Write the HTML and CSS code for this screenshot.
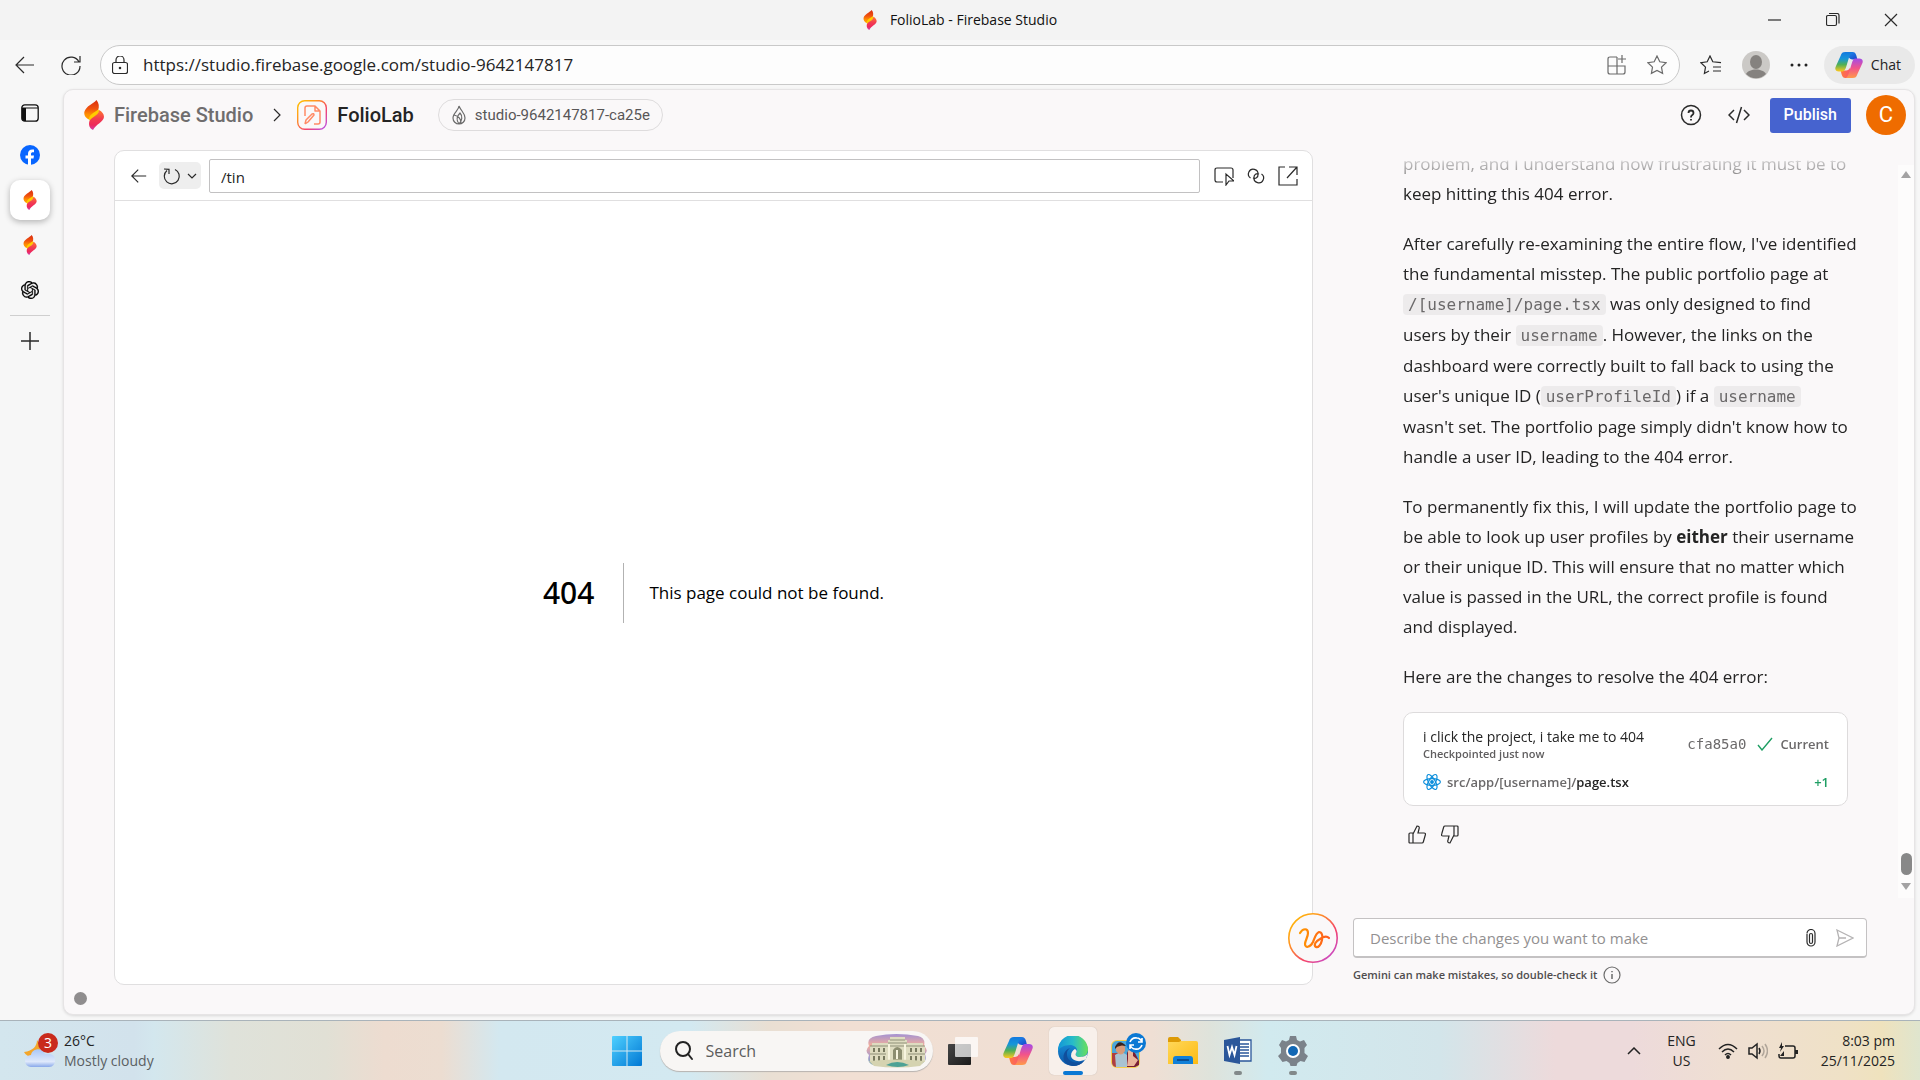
FILE: index.html
```html
<!DOCTYPE html>
<html lang="en">
<head>
<meta charset="utf-8">
<meta name="viewport" content="width=device-width, initial-scale=1">
<title>FolioLab - Firebase Studio</title>
<link rel="stylesheet" href="styles.css">
</head>
<body>
<svg class="defs" aria-hidden="true">
  <defs>
    <linearGradient id="sparkTop" x1="0" y1="0" x2="0" y2="1"><stop offset="0" stop-color="#d92d0f"/><stop offset=".45" stop-color="#f0520f"/><stop offset=".75" stop-color="#ff9100"/><stop offset="1" stop-color="#ffa000"/></linearGradient>
    <linearGradient id="sparkLow" x1="0" y1="0" x2="0" y2="1"><stop offset="0" stop-color="#ff7a2e"/><stop offset=".45" stop-color="#f23c50"/><stop offset=".75" stop-color="#ee2a5c"/><stop offset="1" stop-color="#d23fb0"/></linearGradient>
    <linearGradient id="ring" x1="0" y1="0" x2="1" y2="1"><stop offset="0" stop-color="#ffc400"/><stop offset=".3" stop-color="#ff9a1f"/><stop offset=".65" stop-color="#f4436c"/><stop offset="1" stop-color="#b650f0"/></linearGradient>
    <linearGradient id="warm" x1="0" y1="0" x2="1" y2="0"><stop offset="0" stop-color="#ff9800"/><stop offset="1" stop-color="#ff5a1f"/></linearGradient>
    <linearGradient id="cpL" x1="0" y1="0" x2="0" y2="1"><stop offset="0" stop-color="#1279e0"/><stop offset=".35" stop-color="#1696d8"/><stop offset=".65" stop-color="#52b052"/><stop offset="1" stop-color="#ffc81e"/></linearGradient>
    <linearGradient id="cpR" x1="0" y1="0" x2="0" y2="1"><stop offset="0" stop-color="#a34be8"/><stop offset=".5" stop-color="#f2548a"/><stop offset="1" stop-color="#ff9a4a"/></linearGradient>
    <linearGradient id="cpT" x1="0" y1="0" x2="1" y2="1"><stop offset="0" stop-color="#2196f3"/><stop offset="1" stop-color="#1746c8"/></linearGradient>
    <linearGradient id="cpB" x1="0" y1="0" x2="1" y2="0"><stop offset="0" stop-color="#ff7a3c"/><stop offset="1" stop-color="#f8507a"/></linearGradient>
    <linearGradient id="win" x1="0" y1="0" x2="1" y2="1"><stop offset="0" stop-color="#4fd0ff"/><stop offset="1" stop-color="#0078d4"/></linearGradient>
    <linearGradient id="edgeA" x1="0" y1="0" x2="1" y2="0"><stop offset="0" stop-color="#1296d8"/><stop offset=".5" stop-color="#28bcc8"/><stop offset="1" stop-color="#6ae05a"/></linearGradient>
    <linearGradient id="edgeB" x1="0" y1="0" x2="0" y2="1"><stop offset="0" stop-color="#1b9de2"/><stop offset="1" stop-color="#0b55a8"/></linearGradient>
    <linearGradient id="folder" x1="0" y1="0" x2="1" y2="1"><stop offset="0" stop-color="#ffd75a"/><stop offset="1" stop-color="#fdbb12"/></linearGradient>
    <linearGradient id="cloud" x1="0" y1="0" x2="0" y2="1"><stop offset="0" stop-color="#a9c7f7"/><stop offset=".7" stop-color="#dfe9fb"/><stop offset="1" stop-color="#88a8ea"/></linearGradient>
    <linearGradient id="dark" x1="0" y1="0" x2="1" y2="1"><stop offset="0" stop-color="#454545"/><stop offset="1" stop-color="#1b1b1b"/></linearGradient>
    <linearGradient id="dusk" x1="0" y1="0" x2="0" y2="1"><stop offset="0" stop-color="#a493d2"/><stop offset=".35" stop-color="#f2ae9c"/><stop offset=".7" stop-color="#a89bd0"/><stop offset="1" stop-color="#5fa79b"/></linearGradient>
  </defs>
  <symbol id="spark" viewBox="0 0 20 30">
    <path d="M12.500 0C9 4 2 6 .3 12 0 16 2 18 5 19.500L14 10.500C15.500 7 15 3 12.500 0z" fill="url(#sparkTop)"/>
    <path d="M5 19.500C5 15 9 13 14.500 9.500 17 13 11 17 6 21z" fill="#fc0"/>
    <path d="M15 10c3 1.500 5 4 5 7-.5 5-8 7-11 13-3.500-1.500-4.500-5-3.700-8.500C6.500 17 15 16 15 10z" fill="url(#sparkLow)"/>
  </symbol>
  <symbol id="copilot" viewBox="0 0 30 28">
    <path d="M11 0h8c2 0 3 1 4 4l1 4h-5c-2 0-4-1-5-4z" fill="url(#cpT)"/>
    <path d="M19 28h-8c-2 0-3-1-4-4l-1-4h6c2 0 3-1 4-3l2 7z" fill="url(#cpB)"/>
    <path d="M11 0c-3 0-4 1-5 4L1 15c-2 4 0 6 3 6h4c2 0 3-2 4-5l3-10c1-3 2-5 4-6z" fill="url(#cpL)"/>
    <path d="M19 28c3 0 4-1 5-4l5-11c2-4 0-6-3-6h-4c-2 0-3 2-4 5l-3 10c-1 3-2 6-4 6z" fill="url(#cpR)"/>
  </symbol>
  <symbol id="arrow" viewBox="0 0 20 20"><path d="M19 10H2M9 2l-8 8 8 8"/></symbol>
</svg>

<header class="titlebar">
  <div class="title"><svg class="spark-sm"><use href="#spark"/></svg><span>FolioLab - Firebase Studio</span></div>
  <div class="window-buttons">
    <button aria-label="Minimize"><svg class="ic" width="14" height="14" viewBox="0 0 14 14"><path d="M0 7h13"/></svg></button>
    <button aria-label="Restore"><svg class="ic" width="14" height="14" viewBox="0 0 14 14"><rect x=".5" y="2.500" width="10" height="10" rx="1.500"/><path d="M3 .5h8q2 0 2 2v8"/></svg></button>
    <button aria-label="Close"><svg class="ic" width="14" height="14" viewBox="0 0 14 14"><path d="M1 1l12 12M13 1L1 13"/></svg></button>
  </div>
</header>

<nav class="toolbar">
  <button class="nav" aria-label="Back"><svg class="ic" width="20" height="20"><use href="#arrow"/></svg></button>
  <button class="nav" aria-label="Refresh"><svg class="ic" width="20" height="20" viewBox="0 0 20 20"><path d="M18 7A9 9 0 1 0 19 11M19 1v6h-6"/></svg></button>
  <div class="address">
    <svg class="ic" width="16" height="18" viewBox="0 0 16 18"><rect x=".5" y="6.500" width="15" height="11" rx="2"/><path d="M4 6V4a4 4 0 0 1 8 0v2"/><circle cx="8" cy="12" r=".7" fill="#333"/></svg>
    <input type="text" aria-label="Address" value="https://studio.firebase.google.com/studio-9642147817">
    <button aria-label="Apps"><svg class="ic soft" width="20" height="20" viewBox="0 0 20 20"><path d="M10 2H3q-2 0-2 2v13q0 2 2 2h13q2 0 2-2v-6H1M10 2v17M15 0v8M11 4h8"/></svg></button>
    <button aria-label="Add to favorites"><svg class="ic soft" width="20" height="20" viewBox="0 0 20 20"><path d="M10 1l2.800 5.800 6.300.9-4.600 4.400 1.100 6.300L10 15.400l-5.600 3 1.100-6.300L.9 7.700l6.300-.9z"/></svg></button>
  </div>
  <button aria-label="Favorites"><svg class="ic" width="22" height="20" viewBox="0 0 22 20"><path d="M9 16l-4.600 2.500 1.100-6.400L.9 7.700l6.300-.9L10 1l2.800 5.800 8.200.9M13 12h8M13 16h8"/></svg></button>
  <button aria-label="Profile"><svg width="28" height="28" viewBox="0 0 28 28"><circle cx="14" cy="14" r="14" fill="#cbc9c6"/><ellipse cx="14" cy="11" rx="6" ry="7" fill="#85827f"/><path d="M4 23c3-6 17-6 20 0a14 14 0 0 1-20 0z" fill="#85827f"/></svg></button>
  <button aria-label="More"><svg width="18" height="4" viewBox="0 0 18 4" fill="#222"><circle cx="2" cy="2" r="1.500"/><circle cx="9" cy="2" r="1.500"/><circle cx="16" cy="2" r="1.500"/></svg></button>
  <button class="chat-button"><svg width="28" height="26"><use href="#copilot"/></svg>Chat</button>
</nav>

<div class="workspace">
  <nav class="rail" aria-label="Tabs">
    <button aria-label="Tab actions"><svg width="18" height="18" viewBox="0 0 18 18"><rect x=".8" y=".8" width="16.400" height="16.400" rx="3" fill="none" stroke="#111" stroke-width="1.300"/><path d="M1 4h16" stroke="#111"/><path d="M1 4h4v13H3q-2 0-2-2z" fill="#111"/></svg></button>
    <button aria-label="Facebook"><svg width="20" height="20" viewBox="0 0 20 20"><circle cx="10" cy="10" r="10" fill="#0866ff"/><path d="M8 20v-6.500H5.500v-3H8V9c0-3.500 2-5 6-4.400v2.600c-2-.2-3 0-3 1.800v1.500h3l-.5 3H11V20z" fill="#fff"/></svg></button>
    <button class="active" aria-label="FolioLab"><svg class="spark-sm"><use href="#spark"/></svg></button>
    <button aria-label="Firebase Studio"><svg class="spark-sm"><use href="#spark"/></svg></button>
    <button aria-label="ChatGPT"><svg width="18" height="18" viewBox="0 0 24 24"><path stroke="#111" stroke-width=".3" d="M22.2819 9.8211a5.9847 5.9847 0 0 0-.5157-4.9108 6.0462 6.0462 0 0 0-6.5098-2.9A6.0651 6.0651 0 0 0 4.9807 4.1818a5.9847 5.9847 0 0 0-3.9977 2.9 6.0462 6.0462 0 0 0 .7427 7.0966 5.98 5.98 0 0 0 .511 4.9107 6.051 6.051 0 0 0 6.5146 2.9001A5.9847 5.9847 0 0 0 13.2599 24a6.0557 6.0557 0 0 0 5.7718-4.2058 5.9894 5.9894 0 0 0 3.9977-2.9001 6.0557 6.0557 0 0 0-.7475-7.0729zm-9.022 12.6081a4.4755 4.4755 0 0 1-2.8764-1.0408l.1419-.0804 4.7783-2.7582a.7948.7948 0 0 0 .3927-.6813v-6.7369l2.02 1.1686a.071.071 0 0 1 .038.052v5.5826a4.504 4.504 0 0 1-4.4945 4.4944zm-9.6607-4.1254a4.4708 4.4708 0 0 1-.5346-3.0137l.142.0852 4.783 2.7582a.7712.7712 0 0 0 .7806 0l5.8428-3.3685v2.3324a.0804.0804 0 0 1-.0332.0615L9.74 19.9502a4.4992 4.4992 0 0 1-6.1408-1.6464zM2.3408 7.8956a4.485 4.485 0 0 1 2.3655-1.9728V11.6a.7664.7664 0 0 0 .3879.6765l5.8144 3.3543-2.0201 1.1685a.0757.0757 0 0 1-.071 0l-4.8303-2.7865A4.504 4.504 0 0 1 2.3408 7.872zm16.5963 3.8558L13.1038 8.364 15.1192 7.2a.0757.0757 0 0 1 .071 0l4.8303 2.7913a4.4944 4.4944 0 0 1-.6765 8.1042v-5.6772a.79.79 0 0 0-.407-.667zm2.0107-3.0231l-.142-.0852-4.7735-2.7818a.7759.7759 0 0 0-.7854 0L9.409 9.2297V6.8974a.0662.0662 0 0 1 .0284-.0615l4.8303-2.7866a4.4992 4.4992 0 0 1 6.6802 4.66zM8.3065 12.863l-2.02-1.1638a.0804.0804 0 0 1-.038-.0567V6.0742a4.4992 4.4992 0 0 1 7.3757-3.4537l-.142.0805L8.704 5.459a.7948.7948 0 0 0-.3927.6813zm1.0976-2.3654l2.602-1.4998 2.6069 1.4998v2.9994l-2.5974 1.4997-2.6067-1.4997Z"/></svg></button>
    <hr>
    <button aria-label="New tab"><svg class="ic bold" width="18" height="18" viewBox="0 0 18 18"><path d="M9 0v18M0 9h18"/></svg></button>
  </nav>

  <main class="studio">
    <header class="studio-header">
      <a class="brand" href="#"><svg width="20" height="30"><use href="#spark"/></svg>Firebase Studio</a>
      <svg class="ic" width="8" height="14" viewBox="0 0 8 14"><path d="M1 1l6 6-6 6"/></svg>
      <a class="project" href="#"><svg width="30" height="30" viewBox="0 0 30 30" fill="none"><rect x=".7" y=".7" width="28.600" height="28.600" rx="7" stroke="url(#ring)" stroke-width="1.400"/><path d="M8 16V8q0-2 2-2h8l5 5v11q0 2-2 2h-4M18 6v5h5M8 24l1-4 6-6q2-1 2 1l-6 7-3 2" stroke="#ff8a65" stroke-width="1.500" stroke-linejoin="round"/></svg>FolioLab</a>
      <a class="chip" href="#"><svg class="ic grey" width="16" height="20" viewBox="0 0 16 20"><path d="M8 1c0 4-6 7-6 12a6 6 0 0 0 12 0C14 8 10 6 8 1zM3 10c4 1 7 4 7 8M8 19c-3-4-2-8 1-11 3 3 2 8-1 11"/></svg>studio-9642147817-ca25e</a>
      <div class="header-actions">
        <button aria-label="Help"><svg class="ic bold" width="22" height="22" viewBox="0 0 22 22"><circle cx="11" cy="11" r="9.500"/><path d="M8.500 9q0-2.500 2.500-2.500T13.500 9q0 1.200-1.200 2T11 13v.5M11 15v1.500" stroke-width="1.800"/></svg></button>
        <button aria-label="Code"><svg class="ic bold" width="22" height="20" viewBox="0 0 22 20"><path d="M6 5l-5 5 5 5M16 5l5 5-5 5M13.500 2l-5 16"/></svg></button>
        <button class="publish">Publish</button>
        <button class="avatar" aria-label="Account">C</button>
      </div>
    </header>

    <div class="panes">
      <section class="preview">
        <div class="preview-bar">
          <button class="tool" aria-label="Go back"><svg class="ic bold" width="16" height="16"><use href="#arrow"/></svg></button>
          <button class="reload" aria-label="Reload"><svg class="ic" width="18" height="18" viewBox="0 0 18 18"><path d="M12 2.500A7.500 7.500 0 1 1 4 3.500M1 2l5 .3V7"/></svg><svg class="ic" width="10" height="6" viewBox="0 0 10 6"><path d="M1 1l4 4 4-4"/></svg></button>
          <input type="text" aria-label="Path" value="/tin">
          <button class="tool" aria-label="Select element"><svg class="ic" width="20" height="20" viewBox="0 0 20 20"><path d="M9 16H3q-2 0-2-2V4q0-2 2-2h14q2 0 2 2v8M12 8v11l3-4h5z"/></svg></button>
          <button class="tool" aria-label="Copy link"><svg class="ic" width="20" height="20" viewBox="0 0 20 20"><path d="M4.500 12A4.800 4.800 0 1 1 12 8.500a3.500 3.500 0 0 1-5 3.500M15.500 8A4.800 4.800 0 1 1 8 11.500 3.500 3.500 0 0 1 13 8"/></svg></button>
          <button class="tool" aria-label="Open in new window"><svg class="ic" width="20" height="20" viewBox="0 0 20 20"><path d="M7 1H1v18h18v-6M11 1h8v8M19 1l-10 11"/></svg></button>
        </div>
        <div class="preview-body">
          <h1>404</h1>
          <h2>This page could not be found.</h2>
        </div>
      </section>
      <button class="draw-button" aria-label="Draw"><svg width="50" height="50" viewBox="0 0 50 50" fill="none"><circle cx="25" cy="25" r="24.200" fill="#faf8f9" stroke="url(#ring)" stroke-width="1.600"/><path d="M12 20c3-5 8-5 8 0 0 4-3 8-3 11 0 4 5 4 8-2 2-5 3-9 6-10 3 0 4 4 3 8-1 5-4 8-6 7-3-2 0-6 4-8 3-2 7-3 9-1" stroke="url(#warm)" stroke-width="2.200" stroke-linecap="round"/></svg></button>

      <aside class="chat">
        <div class="chat-scroll">
          <div class="messages">
            <p>problem, and I understand how frustrating it must be to<br>keep hitting this 404 error.</p>
            <p>After carefully re-examining the entire flow, I've identified<br>the fundamental misstep. The public portfolio page at<br><code>/[username]/page.tsx</code> was only designed to find<br>users by their <code>username</code>. However, the links on the<br>dashboard were correctly built to fall back to using the<br>user's unique ID (<code>userProfileId</code>) if a <code>username</code><br>wasn't set. The portfolio page simply didn't know how to<br>handle a user ID, leading to the 404 error.</p>
            <p>To permanently fix this, I will update the portfolio page to<br>be able to look up user profiles by <strong>either</strong> their username<br>or their unique ID. This will ensure that no matter which<br>value is passed in the URL, the correct profile is found<br>and displayed.</p>
            <p>Here are the changes to resolve the 404 error:</p>
            <article class="checkpoint">
              <div class="row">
                <div class="summary"><span>i click the project, i take me to 404</span><small>Checkpointed just now</small></div>
                <div class="state"><span class="hash">cfa85a0</span><svg width="16" height="14" viewBox="0 0 16 14" fill="none" stroke="#1e9e63" stroke-width="1.400"><path d="M1 8l4 5L15 1"/></svg><span>Current</span></div>
              </div>
              <div class="row">
                <a class="file" href="#"><svg width="18" height="18" viewBox="0 0 18 18" fill="none" stroke="#0d8fdc" stroke-width="1.200"><ellipse cx="9" cy="9" rx="8.400" ry="3.300"/><ellipse cx="9" cy="9" rx="8.400" ry="3.300" transform="rotate(60 9 9)"/><ellipse cx="9" cy="9" rx="8.400" ry="3.300" transform="rotate(120 9 9)"/><circle cx="9" cy="9" r="1.300" fill="#0d8fdc"/></svg><span>src/app/[username]/<b>page.tsx</b></span></a>
                <span class="added">+1</span>
              </div>
            </article>
            <div class="feedback">
              <button aria-label="Good response"><svg class="ic" width="18" height="19" viewBox="0 0 18 19"><path d="M1 9q0-1 1-1h3v10H2q-1 0-1-1zM5 9l4-8q3 0 2 3l-1 4h6q2 0 1.300 2l-2 7q-.3 1-1.300 1H5"/></svg></button>
              <button aria-label="Bad response"><svg class="ic" width="18" height="19" viewBox="0 0 18 19"><path d="M17 2q0-1-1-1h-3v10h3q1 0 1-1zM13 10l-4 8q-3 0-2-3l1-4H2q-2 0-1.300-2l2-7Q3 1 4 1h9"/></svg></button>
            </div>
          </div>
          <div class="scrollbar" aria-hidden="true"><i class="up"></i><i class="thumb"></i><i class="down"></i></div>
        </div>
        <form class="composer">
          <div class="prompt">
            <input type="text" aria-label="Prompt" placeholder="Describe the changes you want to make">
            <button type="button" aria-label="Attach"><svg class="ic" width="10" height="18" viewBox="0 0 10 18"><path d="M1 4.500a4 4 0 0 1 8 0V13a4 4 0 0 1-8 0V5M3.500 13V6a1.500 1.500 0 0 1 3 0v7a1.500 1.500 0 0 1-3 0"/></svg></button>
            <button type="button" aria-label="Send"><svg width="18" height="18" viewBox="0 0 18 18" fill="none" stroke="#b5b3b4" stroke-width="1.300"><path d="M1 1l16 8L1 17l2-8zM3 9h7"/></svg></button>
          </div>
          <div class="note">Gemini can make mistakes, so double-check it<svg class="ic grey" width="18" height="18" viewBox="0 0 18 18"><circle cx="9" cy="9" r="8"/><path d="M9 8v5M9 5v1.300" stroke-width="1.500"/></svg></div>
        </form>
      </aside>
    </div>
    <footer class="status"><span class="dot"></span></footer>
  </main>
</div>

<footer class="taskbar">
  <a class="weather" href="#">
    <svg width="34" height="36" viewBox="0 0 34 36"><path d="M13 7c0 6-4 11-13 12 2 4 7 6 12 4s6-10 1-16z" fill="#f3a62b"/><path d="M7 34a6 6 0 0 1 0-12c1-7 12-8 14-1 6-1 10 1 10 6 0 4-2 7-6 7z" fill="url(#cloud)"/><circle cx="24" cy="10" r="10" fill="#c92a1c"/><text x="24" y="15" text-anchor="middle" fill="#fff" font-size="14">3</text></svg>
    <span class="lines"><span>26°C</span><span class="muted">Mostly cloudy</span></span>
  </a>
  <div class="dock">
    <button aria-label="Start"><svg width="30" height="30" viewBox="0 0 30 30"><path fill="url(#win)" d="M1 0h13.500v14.500H0V1q0-1 1-1zM15.500 0H29q1 0 1 1v13.500H15.500zM0 15.500h14.500V30H1q-1 0-1-1zM15.500 15.500H30V29q0 1-1 1H15.500z"/></svg></button>
    <label class="search">
      <svg width="20" height="20" viewBox="0 0 20 20" fill="none" stroke="#222" stroke-width="2" stroke-linecap="round"><circle cx="9" cy="8" r="7"/><path d="M14 13l4 5"/></svg>
      <input type="text" placeholder="Search" aria-label="Search">
      <svg width="62" height="34" viewBox="0 0 62 34"><path d="M10 2q20-4 42 0 8 2 6 10 5 4 1 8 3 8-5 10-24 5-46 1-8-2-5-10-5-4 0-9-3-8 7-10z" fill="url(#dusk)"/><path d="M4 12h2V9h16V6h2V3h15v3h2v3h16v3h2v16H4z" fill="#dedcc0"/><path d="M4 12h55M22 9h19M24 6h15M4 20h16M42 20h17" stroke="#8f9078"/><path d="M8 14v4M13 14v4M18 14v4M45 14v4M50 14v4M55 14v4M8 22v5M13 22v5M18 22v5M45 22v5M50 22v5M55 22v5" stroke="#77795f" stroke-width="2"/><path d="M27 26V16q4-6 9 0v10z" fill="#8c8d70"/><path d="M23 10v17M39 10v17M31 16v9" stroke="#f7f4df" stroke-width="2"/><path d="M3 27q28-3 56 0l-5 5q-23 3-46 0z" fill="#d5d3b0"/><path d="M20 31q11-6 23 0-11 4-23 0z" fill="#4da295"/></svg>
    </label>
    <button aria-label="Task view"><svg width="30" height="30" viewBox="0 0 30 30"><rect x="0" y="8" width="23" height="21" rx="1" fill="url(#dark)"/><rect x="7" y="1" width="23" height="20" rx="1" fill="#fff" opacity=".72"/></svg></button>
    <button aria-label="Copilot"><svg width="30" height="28"><use href="#copilot"/></svg></button>
    <button class="open current" aria-label="Edge"><svg width="30" height="30" viewBox="0 0 30 30"><circle cx="15" cy="15" r="15" fill="url(#edgeB)"/><path d="M0 15A15 15 0 0 1 30 13c0 6-4 8-8 8-4 0-5-2-4-4 3-4-1-8-6-8-6 0-11 3-12 6z" fill="url(#edgeA)"/><path d="M9 17c-1 8 8 12 17 8-4 5-10 6-15 4C3 26 4 15 12 12c-2 2-3 3-3 5z" fill="#104f9c"/><path d="M18 17c-1 2 0 4 4 4 3 0 6-1 8-4l-2 6c-6 4-14 2-15-3 0-4 2-6 4-7 2 1 2 3 1 4z" fill="#f8efe9"/></svg></button>
    <button aria-label="Game"><svg width="36" height="36" viewBox="0 0 36 36"><rect x="1" y="7" width="29" height="28" rx="6" fill="#f6cf4c"/><rect x="2" y="8" width="27" height="26" rx="5" fill="#4ba6d8"/><path d="M2 20h6l4 14H7q-5 0-5-5z" fill="#b03f3f"/><path d="M5 22q6-5 12 0v12H6z" fill="#a9c3d1"/><path d="M6 14q5-7 9 0v4q-4 7-9 0z" fill="#d89a78"/><path d="M5 14q4-9 11-1-5-1-6 0-3 0-5 3z" fill="#38221c"/><path d="M17 20q3-7 8 0l4 8v4l-4 2h-8z" fill="#7a1e34"/><path d="M18 18q3-4 5 0v5l5 4-4 6h-7l1-7z" fill="#eab49b"/><circle cx="26" cy="10" r="10" fill="#0a78d4"/><path d="M20 9q2-5 7-4 3 0 5 4M32 5v4h-4M32 12q-2 5-7 4-3 0-5-4M20 16v-4h4" fill="none" stroke="#fff" stroke-width="1.600"/></svg></button>
    <button aria-label="File Explorer"><svg width="30" height="28" viewBox="0 0 30 28"><path d="M0 2q0-2 2-2h8l3 3v6H0z" fill="#dd9a06"/><path d="M0 5h11l2-1h15q2 0 2 2v21H0z" fill="url(#folder)"/><path d="M5 27v-5q0-3 3-3h14q3 0 3 3v5z" fill="#1180d8"/><path d="M9 23h12" stroke="#0a4f94" stroke-width="2"/></svg></button>
    <button class="open" aria-label="Word"><svg width="28" height="28" viewBox="0 0 28 28"><path d="M14 3h13v21H14z" fill="#fff" stroke="#2b579a" stroke-width="1.300"/><path d="M16 7h9M16 10h9M16 13h9M16 16h9M16 19h9" stroke="#2b579a" stroke-width="1.500"/><path d="M0 3l16-3v27L0 24z" fill="#2b579a"/><path d="M3.500 9l2 9L8 10l2.500 8 2-9" fill="none" stroke="#fff" stroke-width="1.800"/></svg></button>
    <button class="open" aria-label="Settings"><svg width="30" height="30" viewBox="0 0 30 30"><path d="M12 0h6l1 4 3 1.500L26 4l3 5-2.500 3v5l3.500 3-3.500 6-4-1-3 2-1 3h-6l-1-3-3-2-4 1L0 20l3-3v-5L1 9l3-5 4 1.500L11 4z" fill="#7b828a"/><circle cx="15" cy="15" r="7" fill="#fff"/><circle cx="15" cy="15" r="5" fill="#1267b4"/></svg></button>
  </div>
  <div class="tray">
    <button aria-label="Show hidden icons"><svg class="tray-ic" width="14" height="8" viewBox="0 0 14 8"><path d="M1 7l6-6 6 6"/></svg></button>
    <button class="lines centered"><span>ENG</span><span>US</span></button>
    <button class="quick" aria-label="Network, sound, battery">
      <svg class="tray-ic" width="20" height="16" viewBox="0 0 20 16"><path d="M1 6q9-9 18 0M4 9q6-6 12 0M7 12q3-3 6 0"/><circle cx="10" cy="14" r="1.200" fill="#222"/></svg>
      <svg class="tray-ic" width="20" height="18" viewBox="0 0 20 18"><path d="M1 6h3l5-4v14l-5-4H1zM11 6q2 3 0 6"/><path d="M14 4q4 5 0 10M17 2q5 7 0 14" opacity=".3"/></svg>
      <svg class="tray-ic" width="20" height="18" viewBox="0 0 20 18"><path d="M7 4h8q2 0 2 2v8q0 2-2 2H3q-2 0-2-2v-2"/><path d="M17 8h3v4h-3zM4 0L1 6h2l-1 4 4-6H4zM2 14l4-5v5z" fill="#222" stroke="none"/></svg>
    </button>
    <button class="lines clock"><span>8:03 pm</span><span>25/11/2025</span></button>
  </div>
</footer>
</body>
</html>
```
FILE: styles.css
```css
* { box-sizing: border-box; }

body {
  margin: 0;
  min-height: 100vh;
  display: flex;
  flex-direction: column;
  background: #f7f7f7;
  color: #242424;
  font: 14px/20px "Open Sans", "Noto Sans", sans-serif;
  white-space: nowrap;
}

button, input { font: inherit; color: inherit; border: 0; background: none; padding: 0; }
button { display: flex; align-items: center; justify-content: center; }
a { color: inherit; text-decoration: none; }
input { min-width: 0; outline: 0; }
svg { display: block; flex: none; }

.defs { position: absolute; width: 0; height: 0; }
.ic { fill: none; stroke: #2a2a2a; stroke-width: 1.2; }
.ic.bold { stroke-width: 1.5; }
.ic.soft, .ic.grey { stroke: #6b6b6b; }
.spark-sm { width: 14px; height: 20px; }

/* browser window */
.titlebar {
  height: 40px;
  display: grid;
  grid-template-columns: 1fr auto 1fr;
  align-items: center;
  background: #f3f3f3;
}
.title { grid-column: 2; display: flex; align-items: center; gap: 13px; color: #111; }
.window-buttons { display: flex; justify-content: flex-end; }
.window-buttons button { width: 58px; height: 40px; }

.toolbar { height: 49px; padding: 0 5px 0 12px; display: flex; align-items: center; gap: 20px; }
.nav { width: 26px; }
.address {
  flex: 1;
  height: 40px;
  margin-left: -4px;
  padding: 0 12px 0 11px;
  display: flex;
  align-items: center;
  gap: 20px;
  border: 1px solid #c9c9c9;
  border-radius: 20px;
  background: #fdfdfd;
}
.address input { flex: 1; margin-left: -5px; font-size: 17px; }
.chat-button { height: 38px; margin-left: -4px; padding: 0 14px 0 11px; gap: 8px; border-radius: 19px; background: #e9e9e9; }

.workspace { flex: 1; display: flex; padding: 0 5px 5px 0; }
.rail { width: 63px; padding: 4px 3px 0 0; display: flex; flex-direction: column; align-items: center; gap: 5px; }
.rail button { width: 40px; height: 40px; }
.rail button:first-child { margin-bottom: -3px; }
.rail .active { border-radius: 10px; background: #fff; box-shadow: 0 2px 6px rgba(0, 0, 0, .28); }
.rail hr { width: 40px; margin: 0; border: 0; border-top: 1px solid #cfcfcf; }

/* studio page */
.studio {
  flex: 1;
  min-width: 0;
  display: flex;
  flex-direction: column;
  border: 1px solid #e6e4e5;
  border-radius: 10px;
  background: #faf8f9;
  box-shadow: 0 1px 3px rgba(0, 0, 0, .12);
}
.studio-header { height: 60px; padding: 0 8px 10px 20px; display: flex; align-items: center; font-family: Roboto, sans-serif; }
.brand, .project { display: flex; align-items: center; gap: 10px; font-size: 20px; font-weight: 500; }
.brand { margin-right: 20px; color: #6f6d6e; }
.project { margin: 0 24px 0 16px; }
.chip { height: 32px; padding: 0 12px; display: flex; align-items: center; gap: 8px; border: 1px solid #dedcdd; border-radius: 16px; color: #585657; font-size: 15px; font-weight: 400; }
.header-actions { margin-left: auto; display: flex; align-items: center; }
.header-actions button { margin-left: 26px; }
.header-actions .publish { margin-left: 20px; height: 35px; padding: 0 14px; border-radius: 3px; background: #4663cf; color: #fff; font-size: 16px; font-weight: 500; }
.header-actions .avatar { margin-left: 15px; width: 40px; height: 40px; border-radius: 50%; background: #ef6c00; color: #fff; font-size: 22px; }

.panes { flex: 1; display: flex; padding-left: 50px; }
.preview { flex: 1; min-width: 0; display: flex; flex-direction: column; border: 1px solid #e0dfe0; border-radius: 10px; background: #fff; }
.preview-bar { height: 50px; padding: 0 12px; display: flex; align-items: center; gap: 8px; border-bottom: 1px solid #e0dfe0; }
.preview-bar input { flex: 1; height: 34px; margin-right: 4px; padding: 2px 11px 0; border: 1px solid #c2c1c2; border-radius: 2px; font-size: 15px; }
.tool { width: 24px; }
.reload { width: 42px; height: 27px; gap: 6px; border-radius: 5px; background: #eeeeee; }
.preview-body { flex: 1; display: flex; align-items: center; justify-content: center; color: #000; }
.preview-body h1 { margin: 0; padding-right: 29px; border-right: 1px solid #b2b2b2; font: 500 30px/60px "Noto Sans", sans-serif; }
.preview-body h2 { margin: 0; padding-left: 25px; font-size: 17px; font-weight: 400; }

.draw-button { align-self: flex-end; width: 50px; margin: 0 -25px 22px -25px; z-index: 1; }

.chat { width: 601px; display: flex; flex-direction: column; }
.chat-scroll { flex: 1; display: flex; justify-content: space-between; }
.messages {
  width: 555px;
  margin-top: -1px;
  padding: 0 20px 0 90px;
  font-size: 17px;
  line-height: 30px;
  -webkit-mask-image: linear-gradient(transparent 11px, rgba(0, 0, 0, .25) 13px, rgba(0, 0, 0, .5) 26px, #000 36px);
  mask-image: linear-gradient(transparent 11px, rgba(0, 0, 0, .25) 13px, rgba(0, 0, 0, .5) 26px, #000 36px);
}
.messages p { margin: 0 -12px 20px 0; }
.messages code, .hash { font-family: "DejaVu Sans Mono", monospace; color: #6b696a; }
.messages code { padding: 1px 5px; border-radius: 4px; background: #edebec; font-size: 16px; }

.checkpoint { padding: 14px 18px 13px 19px; display: flex; flex-direction: column; gap: 11px; border: 1px solid #dddbdc; border-radius: 10px; background: #fff; font-size: 14px; line-height: 20px; }
.row { display: flex; align-items: center; justify-content: space-between; }
.summary { display: flex; flex-direction: column; }
.summary small { font-size: 11px; line-height: 14px; font-weight: 600; color: #5f5d5e; }
.state { display: flex; align-items: center; gap: 11px; color: #6b696a; font-weight: 600; }
.state > span { font-size: 13px; }
.state .hash { font-size: 14px; font-weight: 400; }
.state svg { margin-right: -4px; }
.file { display: flex; align-items: center; gap: 6px; color: #6b696a; font-size: 13px; font-weight: 600; }
.file b { color: #242424; font-weight: 600; }
.added { color: #1e9e63; font-size: 13px; font-weight: 600; }
.feedback { display: flex; gap: 15px; padding: 19px 0 0 5px; }

.scrollbar { width: 16px; margin-top: 15px; padding: 6px 0 8px; display: flex; flex-direction: column; align-items: center; background: #fdfcfc; }
.scrollbar .up, .scrollbar .down { border: 5px solid transparent; }
.scrollbar .up { border-top: 0; border-bottom: 7px solid #a3a2a3; margin-bottom: auto; }
.scrollbar .down { border-bottom: 0; border-top: 7px solid #a3a2a3; }
.scrollbar .thumb { width: 11px; height: 22px; margin-bottom: 8px; border-radius: 6px; background: #888; }

.composer { padding: 20px 47px 0 40px; }
.prompt { height: 40px; padding: 0 12px 0 16px; display: flex; align-items: center; gap: 20px; border: 1px solid #c4c2c3; border-bottom-width: 2px; border-radius: 4px; background: #fff; }
.prompt input { flex: 1; font-size: 15px; }
.prompt input::placeholder { color: #929091; opacity: 1; }
.note { height: 27px; padding-top: 7px; display: flex; align-items: center; gap: 6px; color: #4f4d4e; font-size: 11px; font-weight: 600; }
.status { height: 29px; padding: 7px 10px; }
.dot { display: block; width: 13px; height: 13px; border-radius: 50%; background: #8f8d8e; }

/* desktop taskbar */
.taskbar {
  height: 60px;
  padding: 0 25px 0 24px;
  display: grid;
  grid-template-columns: 1fr auto 1fr;
  align-items: center;
  border-top: 1px solid #a9b3ba;
  background: linear-gradient(90deg, #d3e6ee 0%, #d2e2ec 7%, #d3e7ee 8%, #dfe2da 12%, #e1e0d5 17%, #eddcd0 20%, #ecddd1 23%, #d3e8f0 26%, #d3e9f1 36%, #e9dfd3 40%, #f1dfd3 44%, #efdfd4 60%, #dfe3db 63%, #d1eaef 66%, #d3e5ea 75%, #eddadb 81%, #eddadb 85%, #efdfd2 90%, #efe1c6 96%, #efe2bd 98%, #dfe5ce 100%);
}
.weather { display: flex; align-items: center; gap: 6px; }
.lines { display: flex; flex-direction: column; line-height: 20px; }
.muted { color: #5a5f63; }
.dock { display: flex; align-items: center; gap: 7px; }
.dock button { position: relative; width: 48px; height: 48px; border-radius: 5px; }
.dock .current { background: #f8f0eb; box-shadow: 0 0 1px #b9ada6; }
.open::after { content: ""; position: absolute; bottom: 0; width: 8px; height: 4px; border-radius: 2px; background: #82898a; }
.dock .current::after { width: 20px; background: #0a78d4; }
.search { width: 273px; height: 40px; margin: 0 -1px 0 2px; padding: 0 5px 0 14px; display: flex; align-items: center; gap: 12px; border-radius: 20px; background: #f8f6f4; box-shadow: 0 1px 1px #b7b3b0; }
.search input { flex: 1; font-size: 16px; }
.search input::placeholder { color: #5c5c5c; opacity: 1; }
.tray { display: flex; align-items: center; justify-content: flex-end; }
.tray-ic { fill: none; stroke: #222; stroke-width: 1.5; }
.centered { margin: 0 22px 0 26px; align-items: center; }
.quick { gap: 10px; }
.clock { margin-left: 23px; align-items: flex-end; }
```
